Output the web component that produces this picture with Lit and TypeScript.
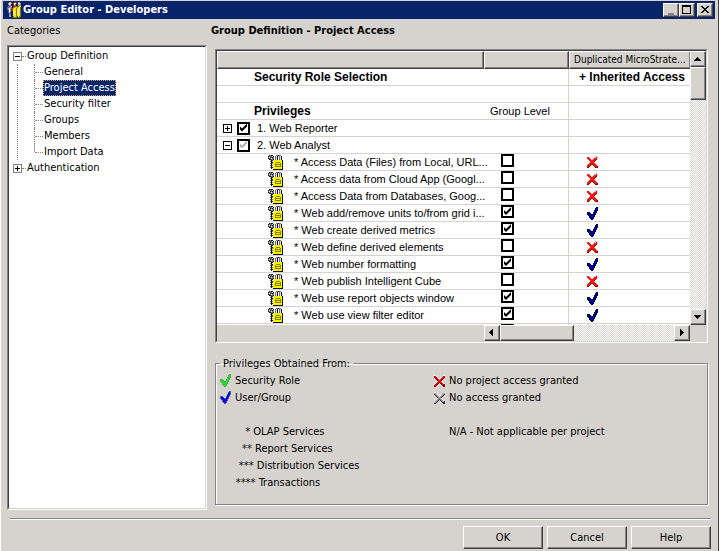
import { LitElement, html, css, svg, nothing } from "lit";
import { customElement } from "lit/decorators.js";

type Mark = "x" | "check" | "";
interface Privilege { name: string; on: boolean; mark: Mark; }

const PRIVILEGES: Privilege[] = [
  { name: "* Access Data (Files) from Local, URL...", on: false, mark: "x" },
  { name: "* Access data from Cloud App (Googl...", on: false, mark: "x" },
  { name: "* Access Data from Databases, Goog...", on: false, mark: "x" },
  { name: "* Web add/remove units to/from grid i...", on: true, mark: "check" },
  { name: "* Web create derived metrics", on: true, mark: "check" },
  { name: "* Web define derived elements", on: false, mark: "x" },
  { name: "* Web number formatting", on: true, mark: "check" },
  { name: "* Web publish Intelligent Cube", on: false, mark: "x" },
  { name: "* Web use report objects window", on: true, mark: "check" },
  { name: "* Web use view filter editor", on: true, mark: "check" },
  { name: "", on: true, mark: "" },
];

/* Builds a small icon from rows of palette letters; a dot is transparent. */
const pixels = (rows: string[], palette: Record<string, string>) => {
  const width = Math.max(...rows.map((r) => r.length));
  return html`<svg class="ico" width=${width} height=${rows.length} shape-rendering="crispEdges" aria-hidden="true">
    ${Object.entries(palette).map(([key, fill]) => {
      let d = "";
      rows.forEach((row, y) => [...row].forEach((c, x) => { if (c === key) d += `M${x} ${y}h1v1h-1z`; }));
      return svg`<path d=${d} fill=${fill}/>`;
    })}</svg>`;
};

const keyIcon = pixels([
  ".kgkk...ggkgg..",
  "kgggwk.gwk.gwk.",
  "gwkgkg.gwk.gwk.",
  "kggwgg.gwk.gwk.",
  ".kkggk.gwk.gwk.",
  "..wkk.yyyyyyyyk",
  "..gk.yyyyyyyyyk",
  "..wkkyyyooooyyk",
  "..gkgyyoyyyyoyk",
  "..wk.yyooooooyk",
  "..gkgyyoyyyyoyk",
  "..wk.yyooooooyk",
  "..gkkyyyyyyyyyk",
  "...k.yyyyyyyyyk",
  ".....kkkkkkkkkk",
], { k: "#101010", g: "#737173", w: "#dedfde", y: "#f7f300", o: "#848200" });

const CROSS = [
  "........ww.",
  "rrw....wwrw",
  "rrrw..wrrrw",
  ".rrrwwrrrd.",
  "..rrrrrrd..",
  "...rrrrd...",
  "...rrrrw...",
  "..rrrrrrw..",
  ".rrrddrrrw.",
  "rrrd..drrrw",
  "rrd....drrd",
  "dd......ddd",
];
const redCross = pixels(CROSS, { r: "#f71810", d: "#8c0000", w: "#c6c7ce" });

const LEGEND_CROSS = [
  "w.........w",
  "rrw......rr",
  "drrw...wrrd",
  ".drrw.wrrd.",
  "..drrwrrd..",
  "...drrrd...",
  "...wrrrw...",
  "..wrrdrrw..",
  ".wrrd.drrw.",
  "wrrd...drrd",
  "rrd.....ddd",
  "dd.......dd",
];

const CHECK = [
  ".........kk",
  "........knk",
  "........nnk",
  ".......knnk",
  ".......nnk.",
  "kkk...knnk.",
  "knnk..nnk..",
  "knnnkknnk..",
  ".knnnnnk...",
  "..knnnnk...",
  "..knnnk....",
  "...knnk....",
  "....kk.....",
];
const navyCheck = pixels(CHECK, { k: "#000021", n: "#0000a5" });

const appIcon = pixels([
  "..gg...rr..gg.",
  ".gwwg.rwwr.wwg",
  ".gwg..rwo..gwo",
  "..gg...oo..gog",
  ".bbgg.rrrrooyy",
  "bbggb.royyoyyo",
  "bgwgpryyyoyyyo",
  "bgwgpryyyoywyo",
  ".bwgpryyyoywyo",
  ".bwgp.ywyoywyo",
  ".bgb..ywyoywyo",
  "..gb..ywyoywyo",
  "..gb..ywyoywyo",
  "..gg..yyyoyyyo",
  "..gg..oyyooyoo",
  "......oooo.oo.",
], { g: "#9c9aa5", w: "#f7f3c6", r: "#b53029", o: "#8c7d10", y: "#f7e308", b: "#635d94", p: "#842463" });

@customElement("app-root")
export class AppRoot extends LitElement {
  static styles = css`
    :host, * { box-sizing: border-box; }
    :host {
      display: flex; flex-direction: column; min-height: 100vh;
      padding: 1px 3px 2px 2px; background: #d6d3ce; color: #000;
      border-left: 1px solid #fff; border-right: 1px solid #424142;
      font: 11px/16px "DejaVu Sans Condensed", "DejaVu Sans", sans-serif;
    }
    h1, h2, ul, p { margin: 0; padding: 0; font-size: 11px; }
    ul { list-style: none; }
    button { font: inherit; color: inherit; padding: 0; }
    .ico { display: block; flex: none; }
    .titlebar { display: flex; align-items: center; height: 18px; padding: 0 2px 0 4px; background: #08246b; color: #fff; }
    .titlebar h1 { flex: 1; margin-left: 2px; line-height: 18px; }
    .raised {
      background: #d6d3ce; border: 1px solid; border-color: #fff #424142 #424142 #fff;
      box-shadow: inset -1px -1px #848284; border-radius: 0;
    }
    .winbtn { display: grid; place-items: center; width: 16px; height: 14px; }
    .close { margin-left: 2px; }
    .panes { flex: 1; display: flex; gap: 4px; padding: 4px 7px 0 4px; }
    .side { display: flex; flex-direction: column; width: 200px; }
    .side h2 { font-weight: normal; line-height: 16px; margin-bottom: 6px; }
    .main { flex: 1; min-width: 0; display: flex; flex-direction: column; }
    .main h2 { line-height: 16px; margin-bottom: 10px; }
    .sunken { background: #fff; border: 1px solid; border-color: #848284 #fff #fff #848284; }
    .sunken > .well { border: 1px solid; border-color: #424142 #d6d3ce #d6d3ce #424142; }
    .tree { flex: 1; display: flex; }
    .tree .well { flex: 1; padding: 1px 4px 0; }
    .node { display: flex; align-items: center; height: 16px; }
    .node .dots { width: 4px; border-top: 1px dotted #848284; }
    .node span { padding: 0 1px; }
    .box { display: grid; place-items: center; width: 9px; height: 9px; background: #fff; border: 1px solid #848284; }
    .box.black { border-color: #000; }
    .kids { margin-left: 4px; border-left: 1px dotted #848284; padding-left: 16px; }
    .kids li { display: flex; align-items: center; height: 16px; border-left: 1px dotted #848284; }
    .kids li:last-child { border-image: linear-gradient(#a5a2a5 50%, transparent 50%) 1; }
    .kids li::before { content: ""; width: 8px; border-top: 1px dotted #848284; }
    .kids a { color: inherit; text-decoration: none; padding: 0 1px; }
    .kids a.sel { background: #08246b; color: #fff; outline: 1px dotted #d6a35a; outline-offset: -1px; }
    .grid { margin-left: 4px; height: 294px; display: flex; }
    .grid .well { flex: 1; min-width: 0; display: grid; grid-template: minmax(0, 1fr) 16px / minmax(0, 1fr) 16px; background: #d6d3ce; }
    .view { overflow: hidden; background: #fff; }
    table { width: 100%; table-layout: fixed; border-collapse: separate; border-spacing: 0; font: 11px/16px "Liberation Sans", Arial, sans-serif; }
    td, th { padding: 0; height: 17px; text-align: left; white-space: nowrap; }
    td { border-bottom: 1px solid #d6d3ce; vertical-align: top; }
    td.lvl { border-right: 1px solid #d6d3ce; }
    thead th { height: 18px; font: 10px/16px "DejaVu Sans Condensed", "DejaVu Sans", sans-serif; }
    thead th.dup { padding-left: 4px; border-right: 0; }
    tbody th { border-bottom: 1px solid #d6d3ce; padding-left: 37px; font-size: 12px; }
    td b { padding-left: 10px; font-size: 12px; }
    .c2 { width: 85px; } .c3 { width: 121px; }
    .cell { display: flex; align-items: center; height: 16px; }
    .group { padding-left: 6px; gap: 5px; }
    .group label { margin-left: 2px; }
    .priv { padding-left: 51px; gap: 11px; }
    .head { padding-left: 6px; }
    .tick { padding-left: 17px; }
    .state { padding-left: 18px; }
    input { appearance: none; margin: 0; width: 13px; height: 13px; border: 2px solid #000; background: #fff; display: block; }
    .tick input { align-self: flex-start; }
    input:checked::before {
      content: ""; display: block; width: 9px; height: 9px; background: #000;
      clip-path: polygon(1px 3px, 3px 5px, 8px 0, 8px 3px, 3px 8px, 1px 6px);
    }
    input.dim:checked::before { background: #b5b2ad; }
    .vbar, .hbar { display: flex; background: repeating-conic-gradient(#fff 0 25%, #d6d3ce 0 50%) 0 0 / 2px 2px; }
    .vbar { flex-direction: column; }
    .hbar { margin-left: auto; width: 206px; }
    .arrow { display: grid; place-items: center; width: 16px; height: 16px; flex: none; }
    .vthumb { height: 33px; } .hthumb { width: 74px; }
    .push { margin-top: auto; } .pushx { margin-left: auto; }
    fieldset {
      margin: 11px 0 0 4px; padding: 0 4px; height: 151px; min-width: 0; display: block;
      border: 1px solid #848284; box-shadow: inset 1px 1px #fff, 1px 1px #fff;
    }
    legend { padding: 2px 3px 0; line-height: 16px; }
    .legend { display: grid; grid-template-columns: 214px minmax(0, 1fr); grid-auto-rows: 17px; line-height: 17px; }
    .legend div { display: flex; align-items: center; gap: 4px; white-space: pre; }
    .noicon { padding-left: 15px; }
    .footer { display: flex; justify-content: flex-end; gap: 4px; margin: 8px 4px 0 7px; padding-top: 7px; border-top: 1px solid #848284; box-shadow: inset 0 1px #fff; }
    .footer button { width: 80px; height: 23px; }
  `;

  private box(open: boolean, black = false) {
    return html`<span class="box ${black ? "black" : ""}"><svg class="ico" width="5" height="5" shape-rendering="crispEdges">
      <path d="M0 2h5v1h-5z"/>${open ? nothing : svg`<path d="M2 0h1v5h-1z"/>`}</svg></span>`;
  }

  private arrow(name: string, d: string, extra = "") {
    return html`<button class="raised arrow ${extra}" aria-label=${name}><svg class="ico" width="8" height="8" shape-rendering="crispEdges"><path d=${d}/></svg></button>`;
  }

  render() {
    const items = ["General", "Project Access", "Security filter", "Groups", "Members", "Import Data"];
    const services = ["OLAP Services", "Report Services", "Distribution Services", "Transactions"];
    return html`
      <header class="titlebar">
        ${appIcon}
        <h1>Group Editor - Developers</h1>
        <button class="raised winbtn" aria-label="Minimize"><svg class="ico" width="10" height="10" shape-rendering="crispEdges"><path d="M2 8h6v2h-6z" fill="#848284"/></svg></button>
        <button class="raised winbtn" aria-label="Maximize"><svg class="ico" width="10" height="10" shape-rendering="crispEdges"><path d="M0 0h9v9h-9zM1 2v6h7v-6z" fill-rule="evenodd"/></svg></button>
        <button class="raised winbtn close" aria-label="Close"><svg class="ico" width="10" height="10" shape-rendering="crispEdges"><path d="M1 1h2v1h1v1h2v-1h1v-1h2v1h-1v1h-1v1h-1v1h1v1h1v1h1v1h-2v-1h-1v-1h-2v1h-1v1h-2v-1h1v-1h1v-1h1v-1h-1v-1h-1v-1h-1z"/></svg></button>
      </header>
      <div class="panes">
        <nav class="side">
          <h2>Categories</h2>
          <div class="sunken tree"><div class="well">
            <div class="node">${this.box(true)}<i class="dots"></i><span>Group Definition</span></div>
            <ul class="kids">${items.map((t) => html`<li><a href="#" class=${t === "Project Access" ? "sel" : ""}>${t}</a></li>`)}</ul>
            <div class="node">${this.box(false)}<i class="dots"></i><span>Authentication</span></div>
          </div></div>
        </nav>
        <main class="main">
          <h2>Group Definition - Project Access</h2>
          <div class="sunken grid"><div class="well">
            <div class="view"><table>
              <colgroup><col><col class="c2"><col class="c3"></colgroup>
              <thead><tr><th class="raised"></th><th class="raised"></th><th class="raised dup">Duplicated MicroStrate...</th></tr></thead>
              <tbody>
                <tr><th>Security Role Selection</th><td class="lvl"></td><td><div class="cell"><b>+ Inherited Access</b></div></td></tr>
                <tr><th></th><td class="lvl"></td><td></td></tr>
                <tr><th>Privileges</th><td class="lvl"><div class="cell head">Group Level</div></td><td></td></tr>
                <tr><td><div class="cell group">${this.box(false, true)}<input type="checkbox" id="g1" checked><label for="g1">1. Web Reporter</label></div></td><td class="lvl"></td><td></td></tr>
                <tr><td><div class="cell group">${this.box(true, true)}<input type="checkbox" id="g2" class="dim" checked><label for="g2">2. Web Analyst</label></div></td><td class="lvl"></td><td></td></tr>
                ${PRIVILEGES.map((p, i) => html`<tr>
                  <td><div class="cell priv">${keyIcon}<label for="p${i}">${p.name}</label></div></td>
                  <td class="lvl"><div class="cell tick"><input type="checkbox" id="p${i}" .checked=${p.on}></div></td>
                  <td><div class="cell state">${p.mark === "x" ? redCross : p.mark === "check" ? navyCheck : nothing}</div></td>
                </tr>`)}
              </tbody>
            </table></div>
            <div class="vbar">${this.arrow("Scroll up", "M3 2h1v1h1v1h1v1h1v1h-7v-1h1v-1h1v-1h1z")}<div class="raised vthumb"></div>${this.arrow("Scroll down", "M0 2h7v1h-1v1h-1v1h-1v1h-1v-1h-1v-1h-1v-1h-1z", "push")}</div>
            <div class="hbar">${this.arrow("Scroll left", "M5 0v7h-1v-1h-1v-1h-1v-1h-1v-1h1v-1h1v-1h1v-1z")}<div class="raised hthumb"></div>${this.arrow("Scroll right", "M2 0h1v1h1v1h1v1h1v1h-1v1h-1v1h-1v1h-1z", "pushx")}</div>
          </div></div>
          <fieldset>
            <legend>Privileges Obtained From:</legend>
            <div class="legend">
              <div>${pixels(CHECK, { k: "#639a63", n: "#18e318" })}Security Role</div>
              <div>${pixels(LEGEND_CROSS, { r: "#ef0008", d: "#6b0000", w: "#fff" })}No project access granted</div>
              <div>${pixels(CHECK, { k: "#5a5d94", n: "#0000ff" })}User/Group</div>
              <div>${pixels(LEGEND_CROSS, { r: "#949294", d: "#313031", w: "#fff" })}No access granted</div>
              <div></div><div></div>
              ${services.map((name, i) => html`<div>${" ".repeat(8 - i) + "*".repeat(i + 1) + " " + name}</div>
                <div class="noicon">${i === 0 ? "N/A - Not applicable per project" : nothing}</div>`)}
            </div>
          </fieldset>
        </main>
      </div>
      <footer class="footer"><button class="raised">OK</button><button class="raised">Cancel</button><button class="raised">Help</button></footer>
    `;
  }
}
